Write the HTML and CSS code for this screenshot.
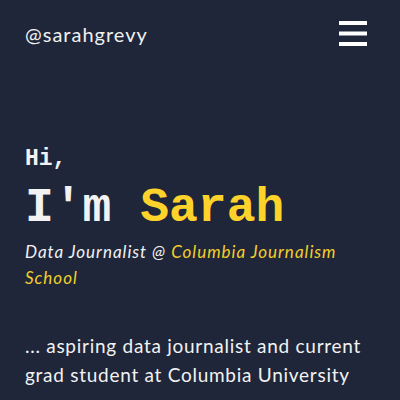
FILE: index.html
```html
<!DOCTYPE html>
<html>
<head>
<meta charset="utf-8">
<link rel="stylesheet" href="styles.css">
</head>
<body>
<header class="top">
  <span class="handle">@sarahgrevy</span>
  <svg class="menu" width="28" height="26" viewBox="0 0 28 26">
    <rect x="0" y="0" width="28" height="4" fill="#fff"/>
    <rect x="0" y="10.5" width="28" height="4" fill="#fff"/>
    <rect x="0" y="21" width="28" height="4" fill="#fff"/>
  </svg>
</header>
<main class="hero">
  <p class="hi">Hi,</p>
  <h1 class="name">I'm <span class="accent">Sarah</span></h1>
  <p class="role">Data Journalist @ <span class="accent2">Columbia Journalism</span> <span class="accent2">School</span></p>
  <p class="bio">... aspiring data journalist and current grad student at Columbia University</p>
</main>
</body>
</html>
```
FILE: styles.css
```css
html, body {
  margin: 0;
  padding: 0;
  background: #1f263a;
  color: #f2f2f2;
  font-family: "Lato", "Noto Sans", sans-serif;
}
.top {
  display: flex;
  justify-content: space-between;
  align-items: center;
  padding: 21px 33px 0 25px;
}
.handle {
  font-size: 20px;
  letter-spacing: 1px;
  color: #f0f0f0;
}
.menu { display: block; }
.hero {
  padding: 98px 25px 0 25px;
}
.hi {
  margin: 0;
  font-family: "Liberation Mono", monospace;
  font-weight: bold;
  font-size: 23px;
  line-height: 28px;
}
.name {
  margin: 7px 0 0 0;
  font-family: "Liberation Mono", monospace;
  font-weight: bold;
  font-size: 48px;
  line-height: 56px;
}
.accent { color: #fdd22b; }
.role {
  margin: 3px 0 0 0;
  font-style: italic;
  font-size: 17px;
  line-height: 26px;
  letter-spacing: 1px;
}
.accent2 { color: #f3cf2a; }
.bio {
  margin: 40px 0 0 0;
  font-size: 19px;
  line-height: 29px;
  letter-spacing: 0.73px;
}
```
